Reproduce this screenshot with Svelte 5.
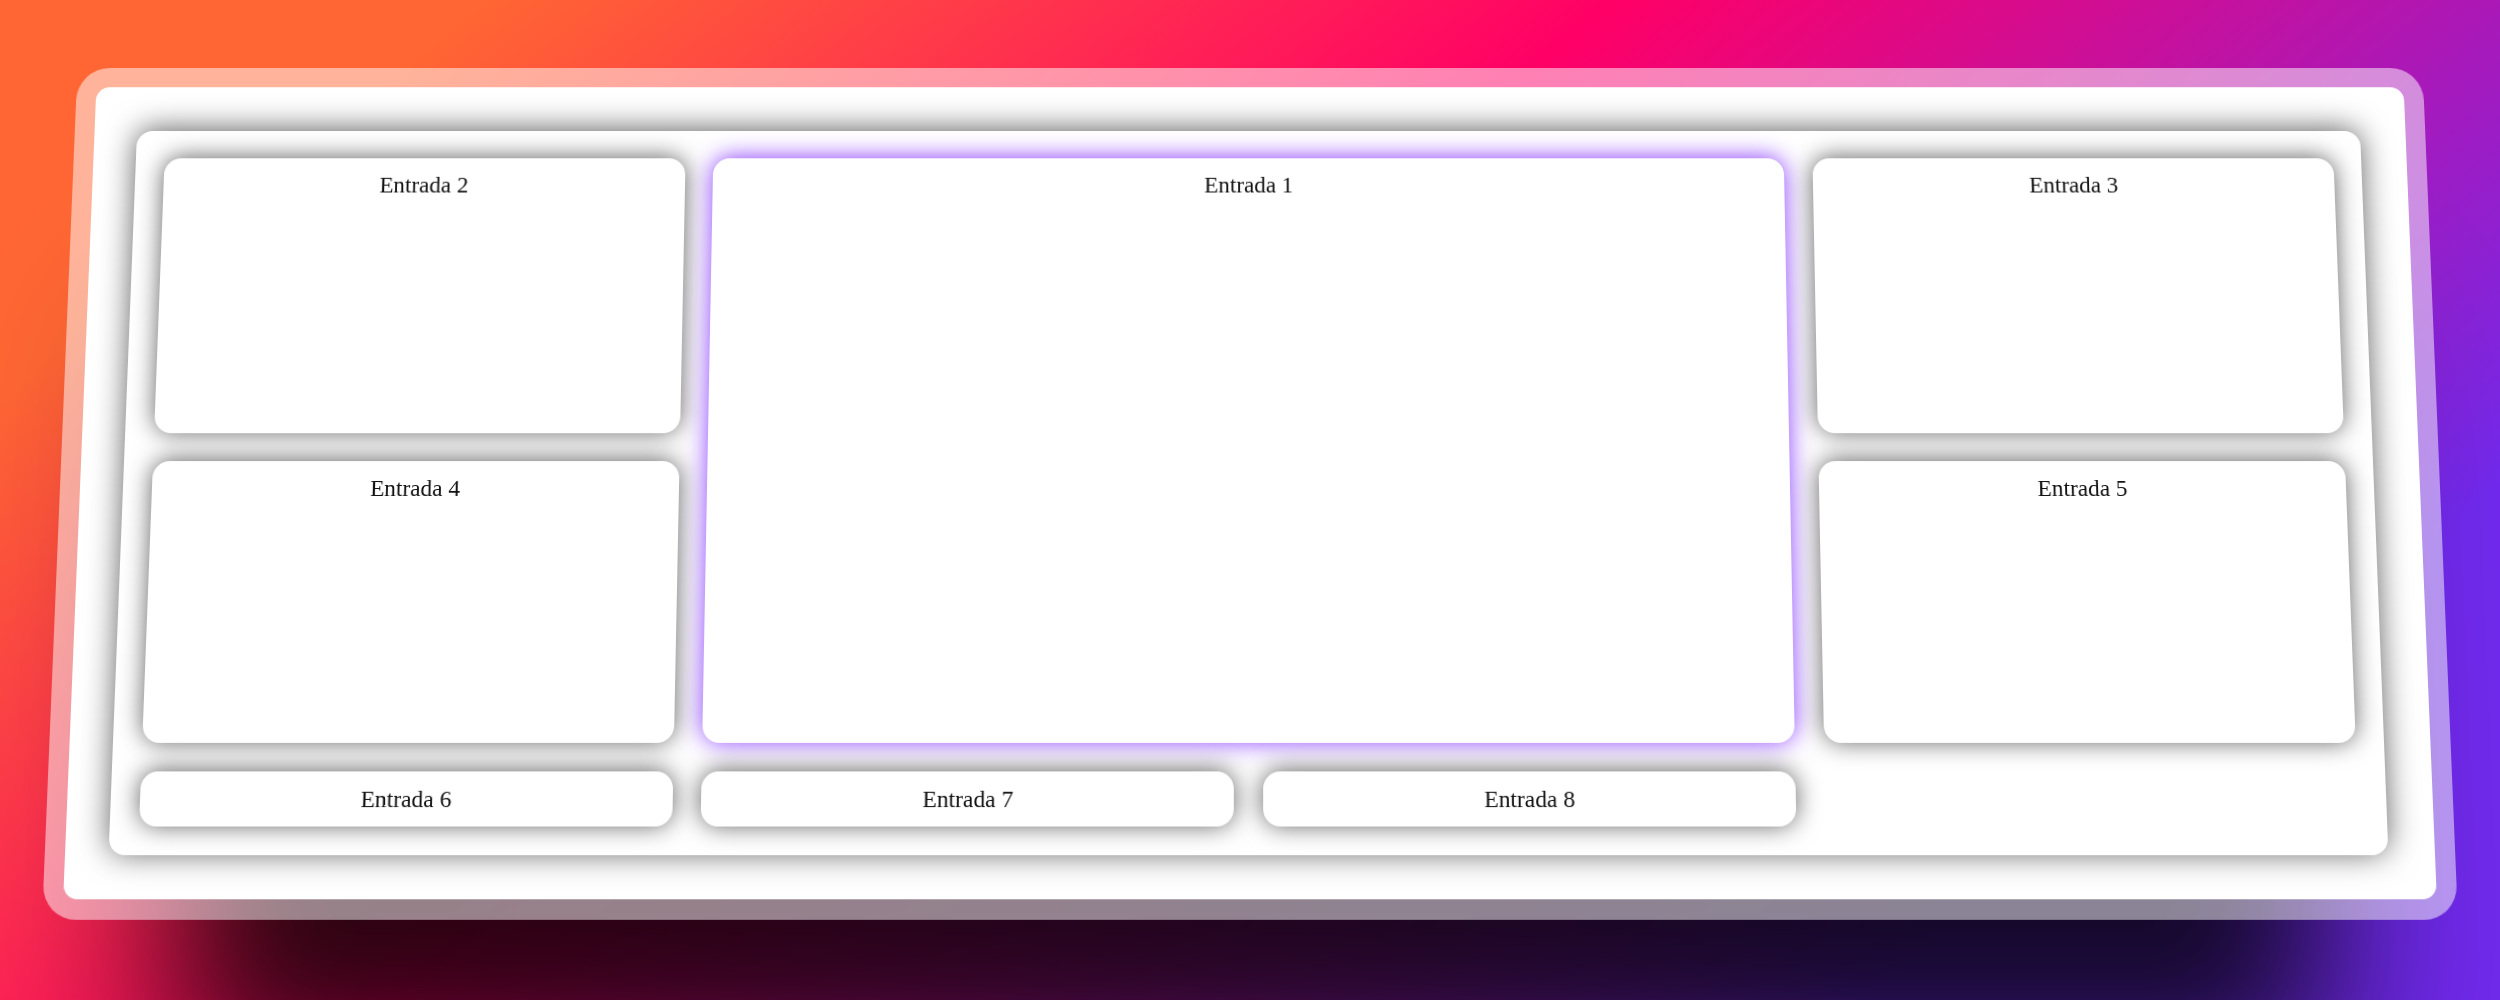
<script>
  const entries = [2, 1, 3, 4, 5, 6, 7, 8];
</script>

<main class="page">
  <section class="panel">
    <div class="board">
      {#each entries as n}
        <article class="entry" class:featured={n === 1}>Entrada {n}</article>
      {/each}
    </div>
  </section>
</main>

<style>
  :global(body) {
    margin: 0;
    overflow: hidden;
  }

  .page {
    box-sizing: border-box;
    height: 1000px;
    padding: 81px 80px 0;
    overflow: hidden;
    background: linear-gradient(141deg, #ff6633 13%, #ff0066 43.3%, #7129ee 83%);
    font-family: "Liberation Serif", "Times New Roman", serif;
    font-size: 23.3px;
    color: #111;
  }

  .panel {
    box-sizing: border-box;
    height: 813px;
    padding: 44.8px 45.8px 43px 43px;
    border-radius: 14px;
    background: #fff;
    transform: perspective(1500px) rotateX(3deg);
    box-shadow:
      0 0 0 20px rgba(255, 255, 255, 0.5),
      0 285px 135px -125px rgba(0, 0, 0, 0.79),
      0 190px 150px -30px rgba(0, 0, 0, 0.18);
  }

  .board {
    box-sizing: border-box;
    height: 725px;
    padding: 27.8px 28.2px 27.8px 28.6px;
    display: grid;
    grid-template-columns: repeat(4, 1fr);
    grid-template-rows: 279.5px 279.5px 54.4px;
    gap: 28px 28.8px;
    border-radius: 16px;
    background: #fff;
    box-shadow: 0 -2px 31px rgba(0, 0, 0, 0.62);
  }

  .entry {
    box-sizing: border-box;
    padding: 14px;
    border-radius: 17px;
    background: #fff;
    text-align: center;
    line-height: 26px;
    box-shadow: 0 -1px 24px rgba(0, 0, 0, 0.62);
  }

  .featured {
    grid-column: span 2;
    grid-row: span 2;
    box-shadow: 0 -1px 24px #8a3dff;
  }
</style>
